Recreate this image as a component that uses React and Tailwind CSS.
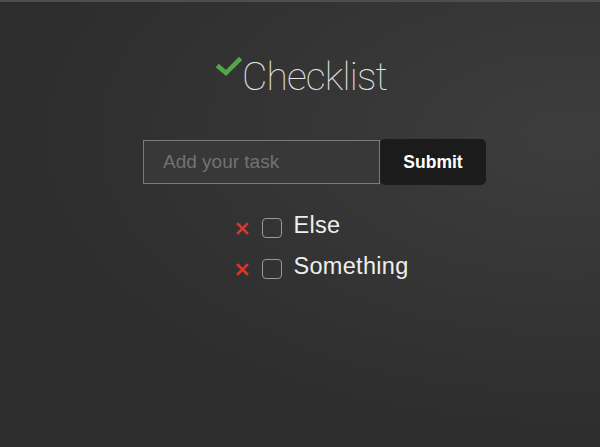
import React, { useState } from 'react';

const tasks = ['Else', 'Something'];

const App = () => {
  const [items, setItems] = useState(tasks);

  return (
    <div className="w-[600px] h-[447px] overflow-hidden border-t-2 border-[#4e4e4e] bg-[radial-gradient(ellipse_at_95%_30%,#3d3d3d,#2d2d2d_70%)] font-['Liberation_Sans',Arial,sans-serif]">
      <div className="flex justify-center pt-[50px] pl-[3px]">
        <div className="flex items-start">
          <svg width="26" height="20" viewBox="0 0 26 20" className="mt-[5px] mr-[0px]">
            <polyline points="3,10 10,16 23,3" fill="none" stroke="#4fa84a" strokeWidth="4.5" strokeLinecap="square" />
          </svg>
          <h1 className="font-['Roboto',sans-serif] font-thin text-[39px] leading-[50px] text-[#e6e6e6] tracking-[-0.8px]">Checklist</h1>
        </div>
      </div>

      <div className="flex justify-center pl-[29px] mt-[37px]">
        <input
          type="text"
          placeholder="Add your task"
          className="w-[237px] h-[44px] mt-[1px] border border-[#7a7a7a] bg-[#383838] px-[19px] text-[19px] text-[#ddd] placeholder:text-[#727272] outline-none"
        />
        <button className="w-[106px] h-[46px] rounded-[5px] bg-[#1b1b1b] text-white text-[17.5px] font-bold">
          Submit
        </button>
      </div>

      <ul className="flex flex-col items-start w-fit mx-auto pl-[45px] mt-[26px] gap-[13px]">
        {items.map((item) => (
          <li key={item} className="flex items-center h-[28px]">
            <button onClick={() => setItems((prev) => prev.filter((i) => i !== item))} className="mr-[13px] mt-[6px]">
              <svg width="13" height="13" viewBox="0 0 13 13">
                <path d="M2 2 L11 11 M11 2 L2 11" stroke="#d9362c" strokeWidth="2.6" strokeLinecap="square" />
              </svg>
            </button>
            <span className="w-[20px] h-[20px] rounded-[4px] border-[1.5px] border-[#9a9a9a] mr-[11px] mt-[5px]" />
            <span className="text-[23.5px] text-[#eee] leading-[28px] tracking-[0.3px]">{item}</span>
          </li>
        ))}
      </ul>
    </div>
  );
};

export default App;
